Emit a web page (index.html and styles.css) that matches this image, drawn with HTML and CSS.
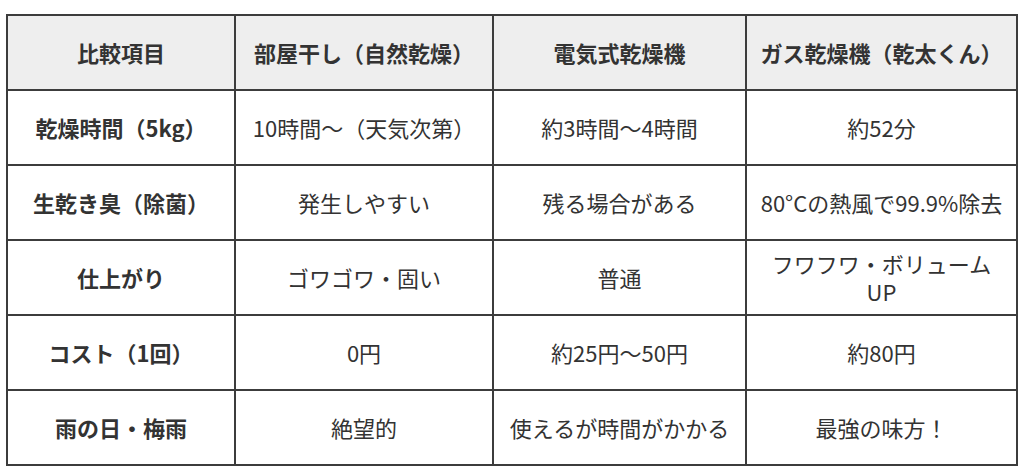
FILE: index.html
```html
<!DOCTYPE html>
<html lang="ja">
<head>
<meta charset="utf-8">
<link rel="stylesheet" href="styles.css">
</head>
<body>
<div class="wrap">
<table class="compare">
<colgroup>
<col class="c1"><col class="c2"><col class="c3"><col class="c4">
</colgroup>
<thead>
<tr><th>比較項目</th><th>部屋干し（自然乾燥）</th><th>電気式乾燥機</th><th>ガス乾燥機（乾太くん）</th></tr>
</thead>
<tbody>
<tr><th>乾燥時間（5kg）</th><td>10時間〜（天気次第）</td><td>約3時間〜4時間</td><td>約52分</td></tr>
<tr><th>生乾き臭（除菌）</th><td>発生しやすい</td><td>残る場合がある</td><td>80°Cの熱風で99.9%除去</td></tr>
<tr><th>仕上がり</th><td>ゴワゴワ・固い</td><td>普通</td><td>フワフワ・ボリューム UP</td></tr>
<tr><th>コスト（1回）</th><td>0円</td><td>約25円〜50円</td><td>約80円</td></tr>
<tr><th>雨の日・梅雨</th><td>絶望的</td><td>使えるが時間がかかる</td><td>最強の味方！</td></tr>
</tbody>
</table>
</div>
</body>
</html>
```
FILE: styles.css
```css
html, body {
  margin: 0;
  background: #ffffff;
}
.wrap {
  padding: 14px 6px 0 6px;
}
.compare {
  width: 1012px;
  table-layout: fixed;
  border-collapse: collapse;
  font-family: "Noto Sans CJK JP", "Noto Sans", sans-serif;
  font-size: 22px;
  line-height: 1.25;
  color: #333333;
}
.c1 { width: 228px; }
.c2 { width: 258px; }
.c3 { width: 253px; }
.c4 { width: 271px; }
.compare tr {
  height: 75px;
}
.compare th,
.compare td {
  border: 2px solid #3c3c3c;
  padding: 0 11px;
  text-align: center;
  vertical-align: middle;
}
.compare th {
  font-weight: 700;
}
.compare td {
  font-weight: 400;
}
.compare thead th {
  background: #eeeeee;
}
```
